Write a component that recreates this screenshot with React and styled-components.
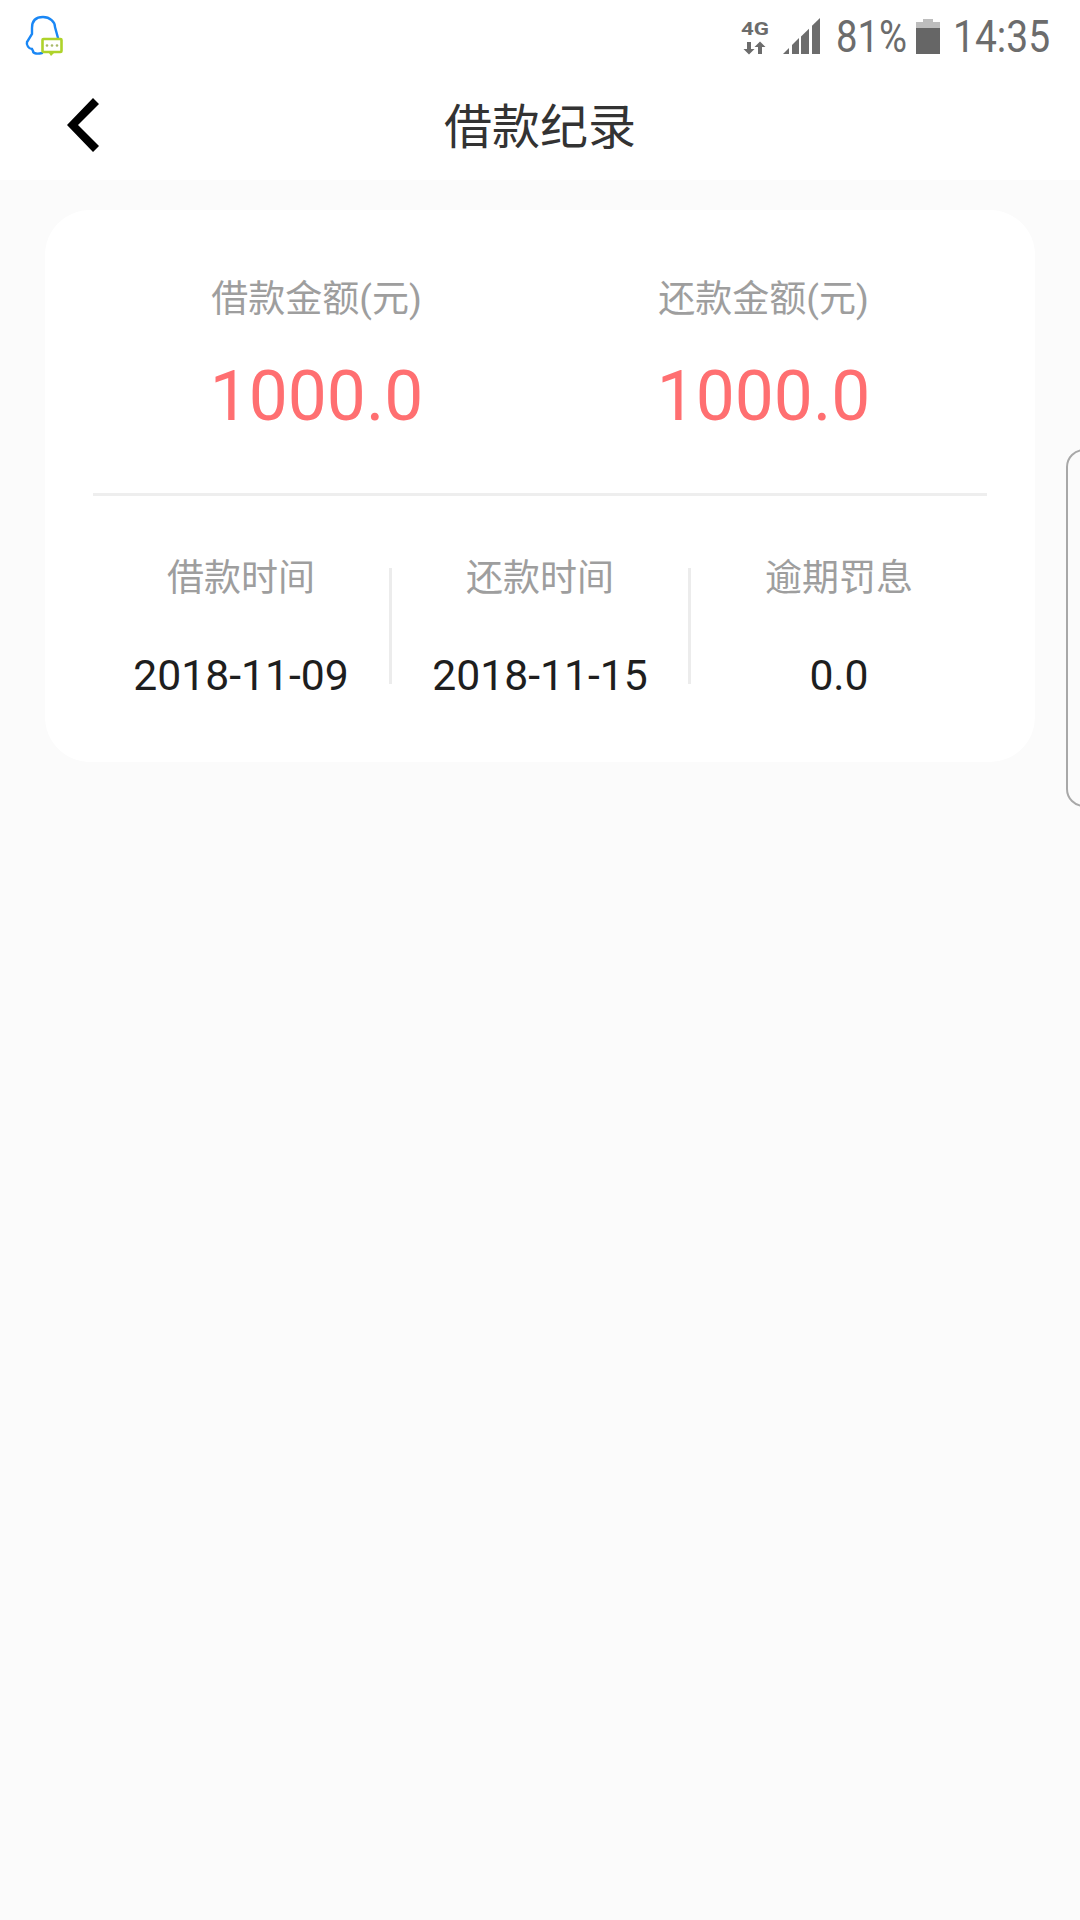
import React from 'react';
import styled, { createGlobalStyle } from 'styled-components';

const GlobalStyle = createGlobalStyle`
  html, body {
    margin: 0;
    padding: 0;
    background: #fbfbfb;
    font-family: Roboto, "Noto Sans CJK SC", sans-serif;
  }
`;

const Page = styled.div`
  position: relative;
  width: 1080px;
  height: 1920px;
  overflow: hidden;
  background: #fbfbfb;
`;

// -------------------------------------------------------------------------
// Status bar

const StatusBar = styled.div`
  display: flex;
  align-items: center;
  justify-content: space-between;
  height: 70px;
  padding: 0 30px 0 24px;
  background: #fff;
  box-sizing: border-box;
`;

const StatusRight = styled.div`
  display: flex;
  align-items: center;
  padding-top: 2px;
  color: #6c6c6c;
`;

const StatusSlot = styled.div`
  display: flex;
  margin-left: ${p => p.$left}px;
`;

const StatusText = styled.span`
  display: block;
  width: ${p => p.$width}px;
  margin-left: ${p => p.$left}px;
  font-size: 45px;
  line-height: 70px;
  white-space: nowrap;
  transform: translateY(1px) scaleX(${p => p.$scale});
  transform-origin: left center;
`;

const QqIcon = () => (
  <svg width="42" height="44" viewBox="0 0 42 44" fill="none">
    <path d="M18 40C14 41 9 41 9 38L8 36C5 36 2 32 3 29L8 21V15C8 8 12 4 19 4C26 4 31 9 31 14L34 25" stroke="#1a87f5" strokeWidth="2.400" strokeLinecap="round" />
    <rect x="18.500" y="26" width="19" height="13" rx="1" fill="#fff" stroke="#aed32a" strokeWidth="2.600" />
    <path d="M25 40h5l-3 3z" fill="#aed32a" />
    <circle cx="23" cy="32.500" r="1.300" fill="#a9b96a" />
    <circle cx="28" cy="32.500" r="1.300" fill="#a9b96a" />
    <circle cx="33" cy="32.500" r="1.300" fill="#a9b96a" />
  </svg>
);

const NetworkIcon = () => (
  <svg width="30" height="35" viewBox="0 0 30 35" overflow="visible">
    <text x="0" y="16" fontFamily="Roboto, sans-serif" fontWeight="700" fontSize="19" textLength="28" lengthAdjust="spacingAndGlyphs" fill="#6c6c6c">4G</text>
    <path d="M6 23h4v7h3.500l-5.500 5.500-5.500-5.500H6z M17 35v-7h-3.500l5.500-5.500 5.500 5.500H21v7z" fill="#6c6c6c" />
  </svg>
);

const SignalIcon = () => (
  <svg width="37" height="36" viewBox="0 0 37 36" fill="#6c6c6c">
    <path d="M0 36L6 30V36z" />
    <path d="M9 27L16 20V36H9z" />
    <path d="M18 18.500L26 10.700V36H18z" />
    <path d="M29 7.800L37 0V36H29z" />
  </svg>
);

const BatteryIcon = () => (
  <svg width="24" height="35" viewBox="0 0 24 35">
    <path d="M7 0h10v3h7v6H0V3h7z" fill="#bdbdbd" />
    <rect y="9" width="24" height="26" fill="#666" />
  </svg>
);

// -------------------------------------------------------------------------
// Header

const Header = styled.header`
  display: grid;
  grid-template-columns: 1fr auto 1fr;
  align-items: center;
  height: 110px;
  background: #fff;
`;

const BackButton = styled.div`
  display: flex;
  padding-left: 67px;
`;

const Title = styled.h1`
  margin: 6px 0 0;
  font-size: 48px;
  line-height: 60px;
  font-weight: 400;
  color: #333;
`;

const BackIcon = () => (
  <svg width="32" height="54" viewBox="0 0 32 54">
    <path d="M0 27L26 0L32 6L11 27L32 48L26 54z" fill="#000" />
  </svg>
);

// -------------------------------------------------------------------------
// Card

const Card = styled.section`
  margin: 30px 45px 0;
  padding: 0 48px;
  height: 552px;
  box-sizing: border-box;
  background: #fff;
  border-radius: 45px;
`;

const TopRow = styled.div`
  display: flex;
  height: 286px;
  box-sizing: border-box;
  border-bottom: 3px solid #eeeeee;
`;

const Amount = styled.div`
  flex: 1;
  display: flex;
  flex-direction: column;
  align-items: center;
  padding-top: 60px;
`;

const Label = styled.div`
  font-size: 37px;
  line-height: 60px;
  color: #9e9e9e;
`;

const AmountValue = styled.div`
  margin-top: 27px;
  font-size: 69.5px;
  line-height: 80px;
  color: #ff6f71;
`;

const BottomRow = styled.div`
  display: flex;
  align-items: flex-start;
`;

const Detail = styled.div`
  flex: 1;
  display: flex;
  flex-direction: column;
  align-items: center;
  padding-top: 53px;
`;

const DetailValue = styled.div`
  margin-top: 41px;
  font-size: 42.7px;
  line-height: 50px;
  color: #1e1e1e;
`;

const Rule = styled.div`
  width: 3px;
  height: 116px;
  margin-top: 72px;
  background: #ececec;
`;

// -------------------------------------------------------------------------
// Edge handle over the page

const EdgeHandle = styled.div`
  position: absolute;
  top: 449px;
  left: 1066px;
  width: 40px;
  height: 358px;
  box-sizing: border-box;
  border: 2px solid #a8a8a8;
  border-radius: 18px;
`;

export default function App() {
  return (
    <Page>
      <GlobalStyle />
      <StatusBar>
        <QqIcon />
        <StatusRight>
          <NetworkIcon />
          <StatusSlot $left={12}><SignalIcon /></StatusSlot>
          <StatusText $width={69} $left={16} $scale={0.85}>81%</StatusText>
          <StatusSlot $left={11}><BatteryIcon /></StatusSlot>
          <StatusText $width={97} $left={13} $scale={0.866}>14:35</StatusText>
        </StatusRight>
      </StatusBar>
      <Header>
        <BackButton><BackIcon /></BackButton>
        <Title>借款纪录</Title>
      </Header>
      <Card>
        <TopRow>
          <Amount>
            <Label>借款金额(元)</Label>
            <AmountValue>1000.0</AmountValue>
          </Amount>
          <Amount>
            <Label>还款金额(元)</Label>
            <AmountValue>1000.0</AmountValue>
          </Amount>
        </TopRow>
        <BottomRow>
          <Detail>
            <Label>借款时间</Label>
            <DetailValue>2018-11-09</DetailValue>
          </Detail>
          <Rule />
          <Detail>
            <Label>还款时间</Label>
            <DetailValue>2018-11-15</DetailValue>
          </Detail>
          <Rule />
          <Detail>
            <Label>逾期罚息</Label>
            <DetailValue>0.0</DetailValue>
          </Detail>
        </BottomRow>
      </Card>
      <EdgeHandle />
    </Page>
  );
}
